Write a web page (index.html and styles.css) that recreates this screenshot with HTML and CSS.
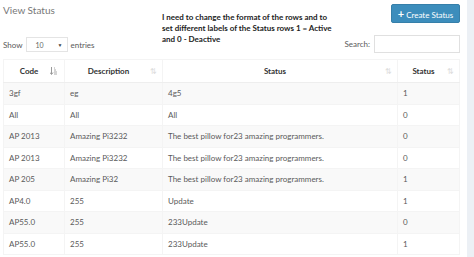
FILE: index.html
```html
<!DOCTYPE html>
<html lang="en">
<head>
  <meta charset="UTF-8" />
  <meta name="viewport" content="width=device-width, initial-scale=1.0" />
  <title>View Status</title>
  <link rel="stylesheet" href="styles.css">
</head>
<body>
  <div class="box">
    <div class="box-header">
      <div class="col-left">
        <h3 class="box-title">View Status</h3>
        <div class="length">
          <span>Show</span>
          <div class="select">10 <span class="caret">&#9660;</span></div>
          <span>entries</span>
        </div>
      </div>
      <p class="note">I need to change the format of the rows and to<br>set different labels of the Status rows 1 = Active<br>and 0 - Deactive</p>
      <div class="col-right">
        <button class="btn-primary"><span class="plus">+</span>Create Status</button>
        <label class="search">Search: <input type="text"></label>
      </div>
    </div>

    <table class="datatable">
      <thead>
        <tr>
          <th class="c-code sorted">Code
            <svg class="sort-asc" width="7" height="8" viewBox="0 0 7 8">
              <path d="M1.5 0v7M0 5.5l1.5 2 1.5-2" stroke="#999" stroke-width="1" fill="none"/>
              <path d="M4 1h1M4 3h2M4 5h3M4 7h3" stroke="#aaa" stroke-width="1"/>
            </svg>
          </th>
          <th class="c-desc">Description<span class="sort">&#8645;</span></th>
          <th class="c-status">Status<span class="sort">&#8645;</span></th>
          <th class="c-flag">Status<span class="sort">&#8645;</span></th>
        </tr>
      </thead>
      <tbody>
        <tr><td>3gf</td><td>eg</td><td>4g5</td><td>1</td></tr>
        <tr><td>All</td><td>All</td><td>All</td><td>0</td></tr>
        <tr><td>AP 2013</td><td>Amazing Pi3232</td><td>The best pillow for23 amazing programmers.</td><td>0</td></tr>
        <tr><td>AP 2013</td><td>Amazing Pi3232</td><td>The best pillow for23 amazing programmers.</td><td>0</td></tr>
        <tr><td>AP 205</td><td>Amazing Pi32</td><td>The best pillow for23 amazing programmers.</td><td>1</td></tr>
        <tr><td>AP4.0</td><td>255</td><td>Update</td><td>1</td></tr>
        <tr><td>AP55.0</td><td>255</td><td>233Update</td><td>0</td></tr>
        <tr><td>AP55.0</td><td>255</td><td>233Update</td><td>1</td></tr>
      </tbody>
    </table>
  </div>
</body>
</html>
```

FILE: styles.css
```css
body {
  margin: 0;
  background: #ecf0f5;
  font-family: Lato, "Liberation Sans", sans-serif;
  font-size: 8px;
  color: #5a5a5a;
}
.box {
  width: 467px;
  height: 257px;
  background: #fff;
  padding: 0 7px 0 3px;
  box-sizing: border-box;
  overflow: hidden;
}
.box-header {
  display: flex;
  height: 59px;
}
.col-left {
  width: 159px;
}
.box-title {
  margin: 0;
  padding-top: 3px;
  font-size: 10px;
  font-weight: normal;
  color: #777;
  line-height: 14px;
}
.length {
  display: flex;
  align-items: center;
  gap: 3px;
  margin-top: 20px;
}
.select {
  width: 42px;
  height: 15px;
  border: 1px solid #e4e4e4;
  box-sizing: border-box;
  display: flex;
  align-items: center;
  padding: 0 4px 0 9px;
  font-size: 7px;
  color: #666;
}
.caret {
  margin-left: auto;
  font-size: 5px;
  color: #444;
}
.note {
  margin: 12px 0 0;
  font-weight: bold;
  color: #222;
  font-size: 8px;
  line-height: 11px;
}
.col-right {
  margin-left: auto;
  display: flex;
  flex-direction: column;
  align-items: flex-end;
}
.btn-primary {
  margin-top: 4px;
  height: 19px;
  width: 69px;
  padding: 0;
  background: #3c8dbc;
  border: 1px solid #367fa9;
  border-radius: 2px;
  color: #fff;
  font-family: inherit;
  font-size: 8px;
}
.plus {
  font-weight: bold;
  font-size: 11px;
  margin-right: 2px;
}
.search {
  margin-top: 12px;
  display: flex;
  align-items: center;
  gap: 4px;
}
.search input {
  width: 86px;
  height: 18px;
  box-sizing: border-box;
  border: 1px solid #e0e0e0;
  margin: 0;
}
.datatable {
  width: 457px;
  border-collapse: collapse;
  table-layout: fixed;
}
.datatable th,
.datatable td {
  border: 1px solid #f4f4f4;
  box-sizing: border-box;
}
.datatable th {
  position: relative;
  height: 23px;
  padding: 0 18px 0 8px;
  text-align: center;
  color: #333;
  font-weight: bold;
  border-bottom: 1px solid #eee;
}
.c-code { width: 61px; }
.c-desc { width: 98px; }
.c-flag { width: 62px; }
.sort {
  position: absolute;
  right: 5px;
  top: 6px;
  color: #ddd;
  font-weight: normal;
  font-size: 8px;
}
.sort-asc {
  position: absolute;
  right: 7px;
  top: 7px;
}
.datatable td {
  height: 21.5px;
  padding: 0 5px;
  white-space: nowrap;
}
.datatable tbody tr:nth-child(odd) {
  background: #f9f9f9;
}
```
